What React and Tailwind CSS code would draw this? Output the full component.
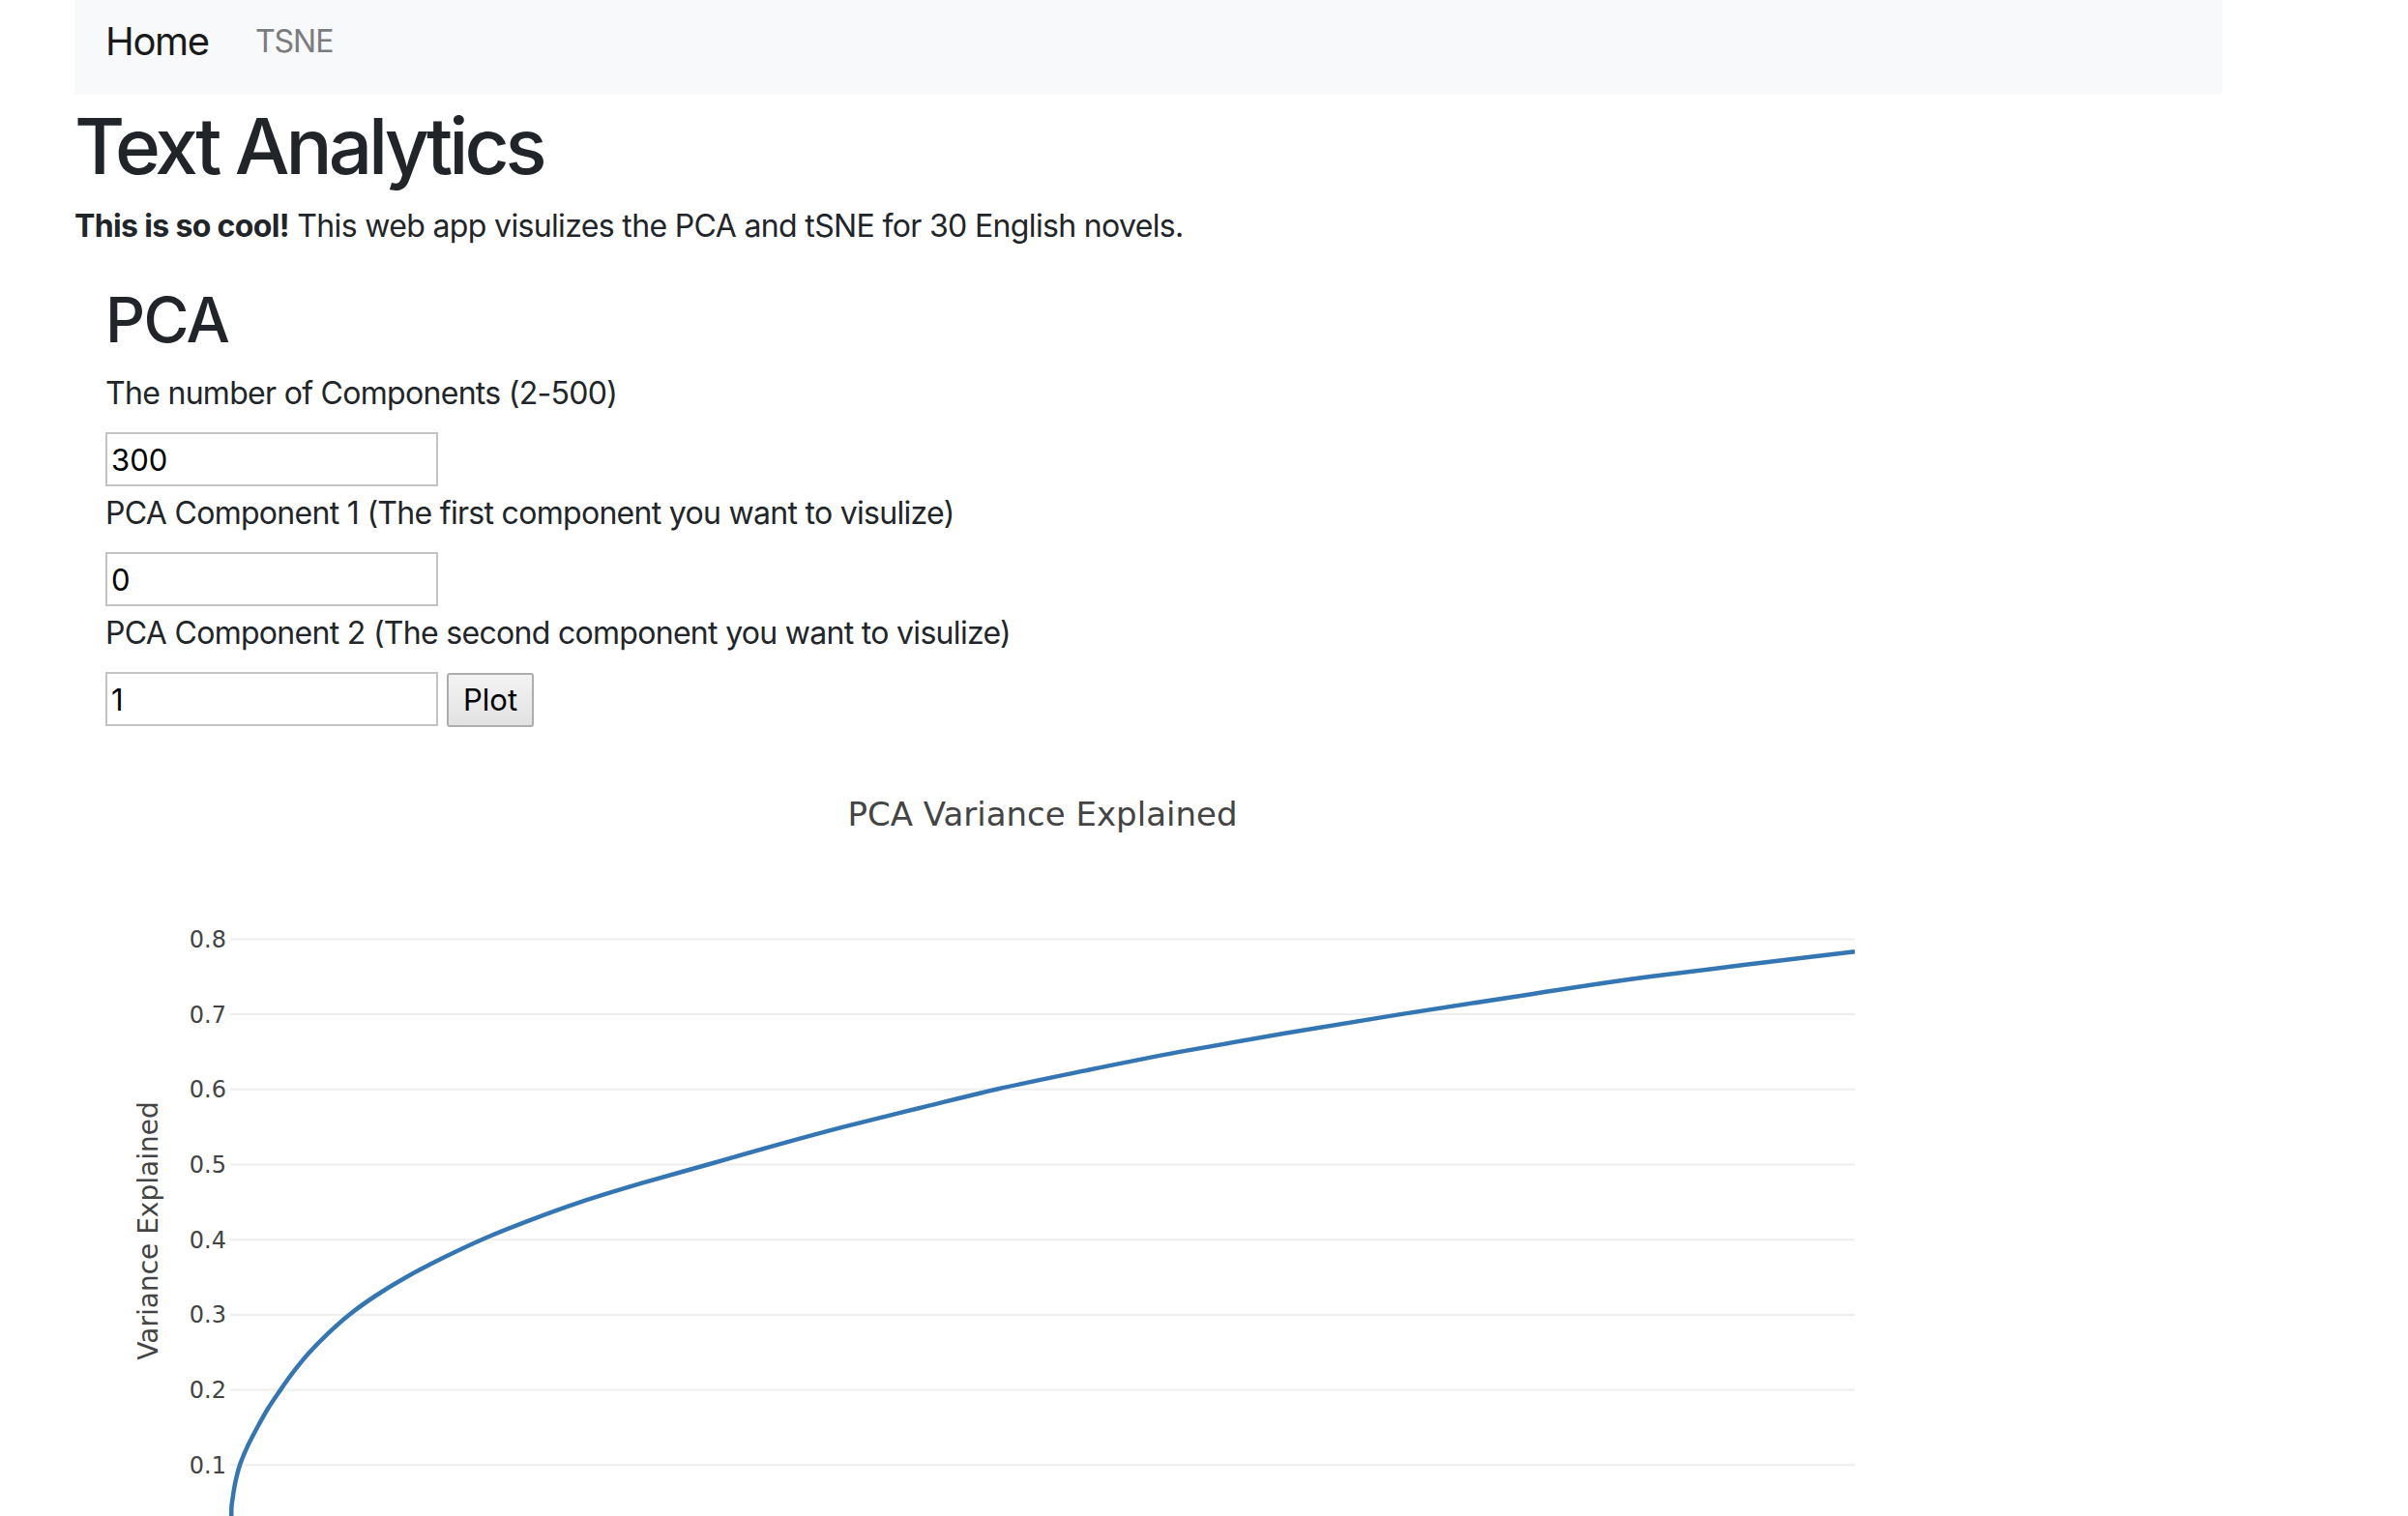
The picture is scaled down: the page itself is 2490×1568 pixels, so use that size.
import React from 'react';

// sampled from the plot: [page x, cumulative variance]
const curve = [
  [239, -0.01], [239.3, 0.04], [240.5, 0.055], [243, 0.075], [248, 0.1], [256, 0.125],
  [266, 0.15], [277, 0.175], [290, 0.2], [304, 0.225], [320, 0.25], [339, 0.275],
  [361, 0.3], [388, 0.325], [420, 0.35], [457, 0.375], [498, 0.4], [546, 0.425],
  [600, 0.45], [663, 0.475], [732, 0.5], [800, 0.525], [872, 0.55], [950, 0.575],
  [1030, 0.6], [1122, 0.625], [1220, 0.65], [1330, 0.675], [1448, 0.7], [1574, 0.725],
  [1705, 0.75], [1918, 0.7834],
];

const toY = (v) => 823 - 777 * v;
const pts = curve.map(([x, v]) => [x - 78, toY(v)]);

// catmull-rom through the samples so the line stays smooth
const smoothPath = (p) => {
  let d = `M${p[0][0]},${p[0][1].toFixed(1)}`;
  for (let i = 0; i < p.length - 1; i++) {
    const p0 = p[i - 1] || p[i];
    const p1 = p[i];
    const p2 = p[i + 1];
    const p3 = p[i + 2] || p2;
    const c1 = [p1[0] + (p2[0] - p0[0]) / 6, p1[1] + (p2[1] - p0[1]) / 6];
    const c2 = [p2[0] - (p3[0] - p1[0]) / 6, p2[1] - (p3[1] - p1[1]) / 6];
    d += ` C${c1[0].toFixed(1)},${c1[1].toFixed(1)} ${c2[0].toFixed(1)},${c2[1].toFixed(1)} ${p2[0]},${p2[1].toFixed(1)}`;
  }
  return d;
};

const ticks = [0.1, 0.2, 0.3, 0.4, 0.5, 0.6, 0.7, 0.8];

const VarianceChart = () => (
  <svg width="2000" height="800" className="block ml-[1px]" style={{ fontFamily: '"DejaVu Sans", Verdana, sans-serif' }}>
    <text x="1000" y="84" textAnchor="middle" fontSize="34" fill="#444">
      PCA Variance Explained
    </text>
    {ticks.map((t) => (
      <g key={t}>
        <line x1="160" x2="1840" y1={toY(t)} y2={toY(t)} stroke="#eee" strokeWidth="2" />
        <text x="156" y={toY(t) + 8.5} textAnchor="end" fontSize="24" fill="#444">
          {t.toFixed(1)}
        </text>
      </g>
    ))}
    <text transform="translate(85,503) rotate(-90)" textAnchor="middle" fontSize="28" fill="#444">
      Variance Explained
    </text>
    <path d={smoothPath(pts)} fill="none" stroke="#3476b3" strokeWidth="4.5" strokeLinejoin="round" />
  </svg>
);

const Field = ({ label, value, first, children }) => (
  <div>
    <label className={`block ${first ? 'mt-[14px]' : 'mt-[4px]'} mb-[16px] text-[32px] leading-[48px] tracking-[-0.7px]`}>{label}</label>
    <div className="flex items-start gap-[9px]">
      <input
        defaultValue={value}
        className="w-[344px] h-[56px] border-2 border-[#c3c3c3] px-[4px] text-[31px] text-black bg-white outline-none"
      />
      {children}
    </div>
  </div>
);

export default function App() {
  return (
    <div className="bg-white h-[1568px] overflow-hidden" style={{ fontFamily: 'Inter, "Liberation Sans", Arial, sans-serif' }}>
      <div className="ml-[77px] w-[2221px] text-[#212529]">
        <nav className="h-[97px] bg-[#f8f9fa] flex items-start px-[32px]">
          <a className="mt-[19px] text-[40px] leading-[48px] tracking-[-1.3px] text-[#1a1a1a] mr-[32px]">Home</a>
          <a className="mt-[24px] text-[32px] leading-[38px] tracking-[-1px] text-[#7b7c7d] px-[16px]">TSNE</a>
        </nav>
        <h1 className="mt-[6px] mb-[11px] text-[80px] leading-[96px] font-medium tracking-[-4px]">Text Analytics</h1>
        <p className="text-[32px] leading-[48px] tracking-[-0.65px]">
          <b className="font-bold">This is so cool!</b> This web app visulizes the PCA and tSNE for 30 English novels.
        </p>
        <section className="pl-[32px]">
          <h2 className="mt-[34px] text-[64px] leading-[77px] font-medium tracking-[-1.5px]">PCA</h2>
          <Field label="The number of Components (2-500)" value="300" first />
          <Field label="PCA Component 1 (The first component you want to visulize)" value="0" />
          <Field label="PCA Component 2 (The second component you want to visulize)" value="1">
            <button className="mt-[1px] h-[56px] px-[15px] border-2 border-[#adadad] rounded-[3px] bg-gradient-to-b from-[#f3f3f3] to-[#e2e2e2] text-[31px] text-black">
              Plot
            </button>
          </Field>
        </section>
        <div className="mt-[18px]">
          <VarianceChart />
        </div>
      </div>
    </div>
  );
}
